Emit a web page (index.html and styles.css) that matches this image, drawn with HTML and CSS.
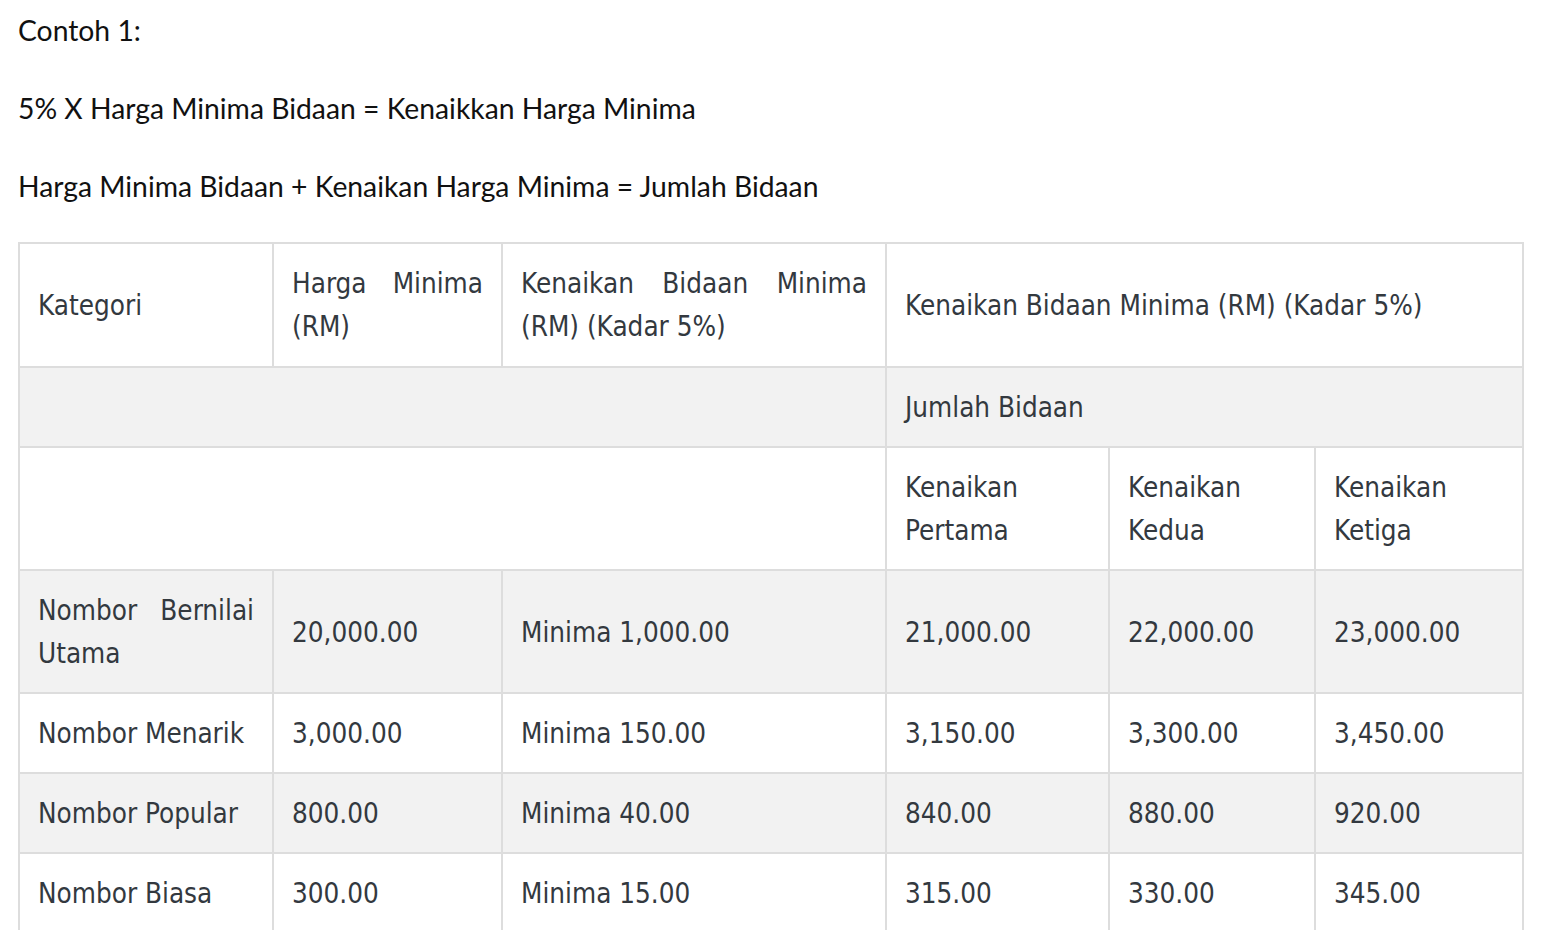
FILE: index.html
```html
<!DOCTYPE html>
<html lang="ms">
<head>
<meta charset="utf-8">
<title>Contoh 1</title>
<link rel="stylesheet" href="styles.css">
</head>
<body>
<div class="content">
  <p class="line">Contoh 1:</p>
  <p class="line">5% X Harga Minima Bidaan = Kenaikkan Harga Minima</p>
  <p class="line">Harga Minima Bidaan + Kenaikan Harga Minima = Jumlah Bidaan</p>
  <table class="bid-table">
    <colgroup>
      <col class="c1"><col class="c2"><col class="c3"><col class="c4"><col class="c5"><col class="c6">
    </colgroup>
    <tbody>
      <tr class="head">
        <td>Kategori</td>
        <td>Harga Minima (RM)</td>
        <td>Kenaikan Bidaan Minima (RM) (Kadar 5%)</td>
        <td colspan="3">Kenaikan Bidaan Minima (RM) (Kadar 5%)</td>
      </tr>
      <tr class="alt">
        <td colspan="3"></td>
        <td colspan="3">Jumlah Bidaan</td>
      </tr>
      <tr>
        <td colspan="3"></td>
        <td>Kenaikan Pertama</td>
        <td>Kenaikan Kedua</td>
        <td>Kenaikan Ketiga</td>
      </tr>
      <tr class="alt">
        <td>Nombor Bernilai Utama</td>
        <td>20,000.00</td>
        <td>Minima 1,000.00</td>
        <td>21,000.00</td>
        <td>22,000.00</td>
        <td>23,000.00</td>
      </tr>
      <tr>
        <td>Nombor Menarik</td>
        <td>3,000.00</td>
        <td>Minima 150.00</td>
        <td>3,150.00</td>
        <td>3,300.00</td>
        <td>3,450.00</td>
      </tr>
      <tr class="alt">
        <td>Nombor Popular</td>
        <td>800.00</td>
        <td>Minima 40.00</td>
        <td>840.00</td>
        <td>880.00</td>
        <td>920.00</td>
      </tr>
      <tr>
        <td>Nombor Biasa</td>
        <td>300.00</td>
        <td>Minima 15.00</td>
        <td>315.00</td>
        <td>330.00</td>
        <td>345.00</td>
      </tr>
    </tbody>
  </table>
</div>
</body>
</html>
```

FILE: styles.css
```css
html, body {
  margin: 0;
  padding: 0;
  background: #ffffff;
}

.content {
  padding: 0 26px 0 18px;
  font-family: Lato, "Liberation Sans", sans-serif;
  color: #111111;
}

.line {
  margin: 0;
  font-size: 28.3px;
  line-height: 40px;
  padding: 10px 0 28px;
}

.bid-table {
  width: 1504px;
  border-collapse: collapse;
  table-layout: fixed;
  font-family: "DejaVu Sans Condensed", "DejaVu Sans", sans-serif;
  font-stretch: condensed;
  font-size: 27.6px;
  line-height: 43px;
  color: #33393f;
  border: 2px solid #dddddd;
  margin-top: 8px;
}

.c1 { width: 254px; }
.c2 { width: 229px; }
.c3 { width: 384px; }
.c4 { width: 223px; }
.c5 { width: 206px; }
.c6 { width: 208px; }

.bid-table td {
  border: 2px solid #dddddd;
  padding: 18px 18px 17px 18px;
  text-align: justify;
  vertical-align: middle;
}

.bid-table tr.head td {
  padding-top: 18px;
  padding-bottom: 18px;
}

.bid-table tr.alt td {
  background: #f2f2f2;
}
```
